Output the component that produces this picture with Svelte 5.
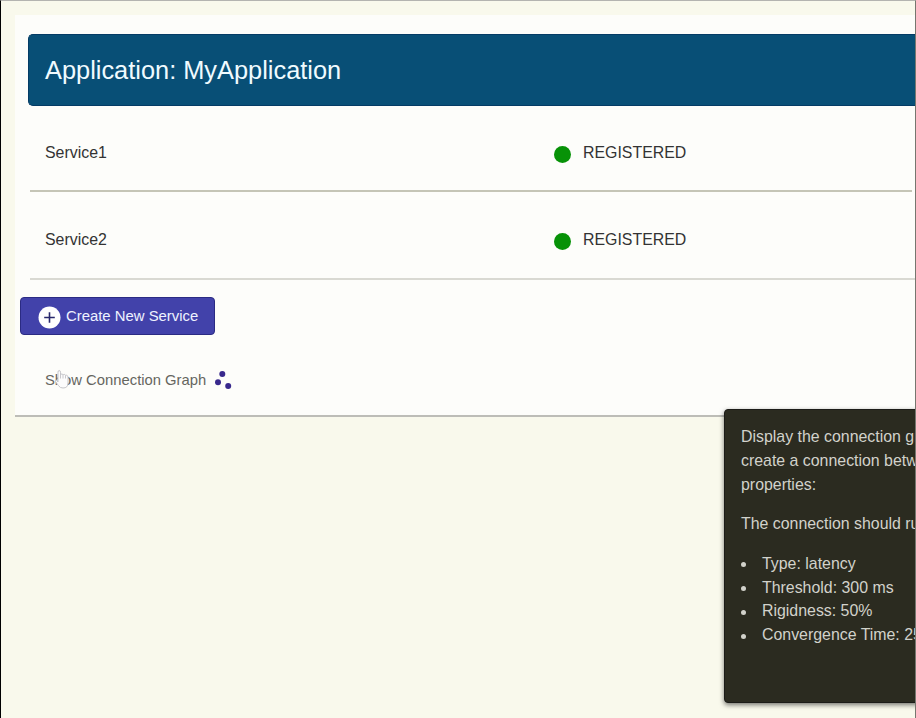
<script>
  const services = [
    { name: 'Service1', status: 'REGISTERED' },
    { name: 'Service2', status: 'REGISTERED' }
  ];
  const properties = ['Type: latency', 'Threshold: 300 ms', 'Rigidness: 50%', 'Convergence Time: 25'];
</script>

<main class="page">
  <section class="card">
    <h1>Application: MyApplication</h1>
    <div class="services">
      {#each services as service}
        <div class="service">
          <span class="name">{service.name}</span>
          <span class="dot"></span>
          <span>{service.status}</span>
        </div>
      {/each}
    </div>
    <button class="create">
      <svg width="23" height="23" viewBox="0 0 23 23">
        <circle cx="11.5" cy="11.5" r="11" fill="#fff" />
        <path d="M11.5 6.2v10.6M6.2 11.5h10.6" stroke="#28286c" stroke-width="1.6" />
      </svg>
      Create New Service
    </button>
    <div class="graph">
      <span>Show Connection Graph</span>
      <svg width="18" height="20" viewBox="0 0 18 20" fill="#38288c">
        <circle cx="8.3" cy="4" r="3" />
        <circle cx="4" cy="12.3" r="3" />
        <circle cx="14.2" cy="16" r="3" />
      </svg>
      <svg class="hand" width="16" height="21" viewBox="0 0 16 21">
        <path
          d="M4 13V3.2Q4 1.5 5.2 1.5T6.5 3.2V6Q6.7 5 7.8 5T9 6Q9.3 5.4 10.3 5.4T11.5 6.5Q12 6 12.9 6.3T14 8V14Q14 19 9 19Q6 19 4.5 16.7L1.5 12.5Q1 11 2.4 11Z"
          fill="#fcfcfc"
          stroke="#c6c6ca"
        />
        <path d="M6.5 5.5v4M9 6v3.5M11.5 6.5v3" stroke="#c8c8cc" />
      </svg>
    </div>
  </section>
  <aside class="caption">
    <p>Display the connection gr<br />create a connection betw<br />properties:</p>
    <p>The connection should ru</p>
    <ul>
      {#each properties as property}
        <li>{property}</li>
      {/each}
    </ul>
  </aside>
</main>

<style>
  :global(body) {
    margin: 0;
    overflow: hidden;
  }
  .page {
    position: relative;
    box-sizing: border-box;
    width: 916px;
    height: 718px;
    overflow: hidden;
    padding: 14px 0 0 14px;
    border-top: 1px solid #b4b4b0;
    border-left: 1px solid #000;
    border-right: 1px solid #77776f;
    background: #f9f9ec;
    font: 16px/24px "Liberation Sans", Arial, sans-serif;
    color: #333;
  }
  .card {
    box-sizing: border-box;
    height: 402px;
    padding-top: 19px;
    border-bottom: 2px solid #bdbdb7;
    background: #fdfdfa;
  }
  h1 {
    box-sizing: border-box;
    height: 72px;
    margin: 0 0 0 13px;
    padding-left: 16px;
    border: 1px solid #043b65;
    border-right: 0;
    border-radius: 5px 0 0 5px;
    background: #084f76;
    color: #f0fbff;
    font-size: 25.38px;
    line-height: 70px;
    font-weight: 400;
    white-space: nowrap;
  }
  .services {
    margin-left: 15px;
  }
  .service {
    box-sizing: border-box;
    display: flex;
    align-items: center;
    padding: 10px 0 0 15px;
    border-bottom: 2px solid #c5c5b6;
    font-size: 15.9px;
  }
  .service:first-child {
    height: 86px;
    margin-right: 3px;
  }
  .service:last-child {
    height: 88px;
    border-color: #d9d9d2;
  }
  .name {
    width: 508.5px;
  }
  .dot {
    width: 17px;
    height: 17px;
    margin: 3px 12.5px 0 0;
    border-radius: 50%;
    background: #079207;
  }
  .create {
    box-sizing: border-box;
    display: flex;
    align-items: center;
    gap: 5px;
    width: 195px;
    height: 38px;
    margin: 17px 0 0 5px;
    padding: 0 0 1px 17px;
    border: 1px solid #2b2b83;
    border-radius: 4px;
    background: #4242aa;
    color: #eef2ff;
    font: inherit;
    font-size: 14.88px;
    white-space: nowrap;
  }
  .create svg {
    flex: none;
    margin-top: 3px;
  }
  .graph {
    position: relative;
    display: flex;
    align-items: center;
    gap: 8px;
    margin: 33px 0 0 30px;
    color: #66665f;
    font-size: 14.8px;
  }
  .graph svg {
    flex: none;
  }
  .hand {
    position: absolute;
    left: 9px;
    top: 1px;
  }
  .caption {
    position: absolute;
    left: 723px;
    top: 408px;
    box-sizing: border-box;
    width: 300px;
    height: 294px;
    padding: 15px 0 0 16px;
    border: 1px solid #1c1c18;
    border-radius: 4px;
    background: #2b2b20;
    box-shadow: 0 2px 5px #0008;
    color: #d2d2cb;
    font-size: 15.9px;
    line-height: 23.8px;
    white-space: nowrap;
  }
  .caption p {
    margin: 0 0 15.8px;
  }
  .caption ul {
    margin: 0;
    padding: 0;
    list-style: none;
  }
  .caption li {
    display: flex;
    align-items: center;
    gap: 16px;
  }
  .caption li::before {
    content: "";
    width: 5px;
    height: 5px;
    margin-top: 2px;
    border-radius: 50%;
    background: #d2d2cb;
  }
</style>
